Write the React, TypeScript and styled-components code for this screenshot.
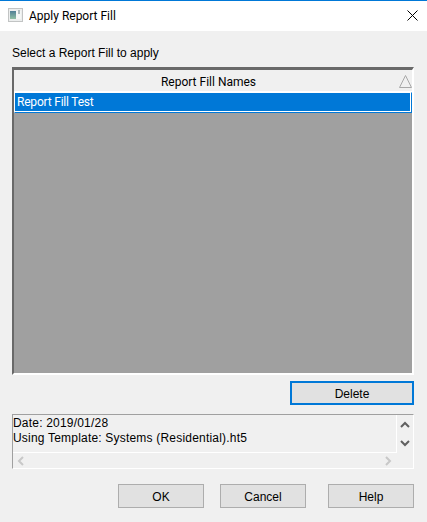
import { createGlobalStyle, styled } from "styled-components";

const GlobalStyle = createGlobalStyle`
  *, *::before, *::after {
    box-sizing: border-box;
  }
  html, body {
    margin: 0;
    padding: 0;
    background: #f0f0f0;
  }
  body {
    font-family: "Liberation Sans", Arial, sans-serif;
    font-size: 12px;
    color: #000;
  }
`;

const Dialog = styled.div`
  width: 427px;
  height: 522px;
  display: flex;
  flex-direction: column;
  background: #f0f0f0;
  overflow: hidden;
`;

const TitleBar = styled.div`
  height: 31px;
  flex: none;
  display: flex;
  align-items: center;
  gap: 6px;
  padding: 0 9px 0 8px;
  background: #fff;
  border-top: 1px solid #0078d7;
`;

const TitleText = styled.span`
  flex: 1;
  font-family: Roboto, sans-serif;
  font-size: 12px;
`;

const TitleGlyph = styled.svg`
  flex: none;
  margin-bottom: 2px;
`;

const Body = styled.div`
  flex: 1;
  display: flex;
  flex-direction: column;
  padding: 14px 13px 0 12px;
`;

const Prompt = styled.div`
  height: 22px;
  line-height: 16px;
`;

const Grid = styled.div`
  height: 308px;
  display: flex;
  flex-direction: column;
  background: #a0a0a0;
  border-style: solid;
  border-width: 3px 2px 2px 2px;
  border-color: #696969 #fff #fff #696969;
`;

const GridHeader = styled.div`
  height: 22px;
  flex: none;
  display: flex;
  align-items: center;
  justify-content: center;
  position: relative;
  padding: 2px 9px 0 0;
  font-family: Roboto, sans-serif;
  background: #f0f0f0;
  border-bottom: 1px solid #fff;
`;

const SortMark = styled.svg`
  position: absolute;
  right: 0;
  top: 5px;
`;

const GridRow = styled.div`
  height: 21px;
  flex: none;
  line-height: 19px;
  padding-left: 2px;
  font-family: Roboto, sans-serif;
  letter-spacing: -0.2px;
  background: #0078d7;
  color: #fff;
  border: 1px solid;
  border-color: #fff #0078d7 #0078d7 #fff;
  box-shadow: inset -1px -1px 0 #fff;
`;

const DeleteRow = styled.div`
  display: flex;
  justify-content: flex-end;
  padding-top: 6px;
`;

const Button = styled.button<{ $wide?: boolean; $focused?: boolean }>`
  width: ${(p) => (p.$wide ? "124px" : "86px")};
  height: 24px;
  padding: 1px 0 0;
  font: inherit;
  color: #000;
  background: #e1e1e1;
  border: ${(p) => (p.$focused ? "2px solid #0078d7" : "1px solid #adadad")};
`;

const InfoBox = styled.div`
  height: 55px;
  margin-top: 9px;
  display: grid;
  grid-template-columns: 1fr 16px;
  grid-template-rows: 38px 15px;
  border-style: solid;
  border-width: 1px;
  border-color: #a0a0a0 #fff #fff #a0a0a0;
`;

const InfoText = styled.div`
  padding-top: 1px;
  line-height: 15px;
  letter-spacing: 0.2px;
  white-space: nowrap;
  overflow: hidden;
  border-right: 1px solid #fff;
  border-bottom: 1px solid #fff;
`;

const VerticalBar = styled.div`
  display: flex;
  flex-direction: column;
  align-items: center;
  justify-content: space-between;
  padding: 6px 0 6px;
`;

const HorizontalBar = styled.div`
  display: flex;
  align-items: center;
  justify-content: space-between;
  padding: 0 5px 0 4px;
`;

const Actions = styled.div`
  display: flex;
  justify-content: flex-end;
  padding-top: 15px;
  gap: 16px;
`;

const HelpButton = styled(Button)`
  margin-left: 6px;
`;

function AppIcon() {
  return (
    <TitleGlyph width="15" height="14" viewBox="0 0 15 14">
      <defs>
        <linearGradient id="appIconFill" x1="0" y1="0" x2="0" y2="1">
          <stop offset="0" stopColor="#4f7f96" />
          <stop offset="1" stopColor="#8fc0a4" />
        </linearGradient>
      </defs>
      <rect x="0.5" y="0.5" width="14" height="13" fill="#eceeee" stroke="#c2c4c4" />
      <rect x="2" y="3" width="6" height="8" fill="url(#appIconFill)" />
      <rect x="8" y="3" width="5" height="8" fill="#f4f7f6" />
      <rect x="10" y="2" width="2" height="4" fill="#aebcbe" />
    </TitleGlyph>
  );
}

function CloseIcon() {
  return (
    <TitleGlyph width="11" height="11" viewBox="0 0 11 11">
      <path d="M0.5 0.5L10.5 10.5M10.5 0.5L0.5 10.5" stroke="#000" strokeWidth="1" fill="none" />
    </TitleGlyph>
  );
}

function Chevron({ dir, color }: { dir: "up" | "down" | "left" | "right"; color: string }) {
  const paths = {
    up: "M1 6L5 2L9 6",
    down: "M1 2L5 6L9 2",
    left: "M6 1L2 5L6 9",
    right: "M2 1L6 5L2 9",
  };
  return (
    <svg width={dir === "up" || dir === "down" ? 10 : 8} height={dir === "up" || dir === "down" ? 8 : 10}>
      <path d={paths[dir]} stroke={color} strokeWidth="2" fill="none" />
    </svg>
  );
}

export default function App() {
  return (
    <Dialog>
      <GlobalStyle />
      <TitleBar>
        <AppIcon />
        <TitleText>Apply Report Fill</TitleText>
        <CloseIcon />
      </TitleBar>
      <Body>
        <Prompt>Select a Report Fill to apply</Prompt>
        <Grid>
          <GridHeader>
            Report Fill Names
            <SortMark width="13" height="13" viewBox="0 0 13 13">
              <path d="M6.5 0.5L12.5 12.5H0.5Z" fill="none" stroke="#a8a8a8" />
            </SortMark>
          </GridHeader>
          <GridRow>Report Fill Test</GridRow>
        </Grid>
        <DeleteRow>
          <Button $wide $focused>Delete</Button>
        </DeleteRow>
        <InfoBox>
          <InfoText>
            Date: 2019/01/28
            <br />
            Using Template: Systems (Residential).ht5
          </InfoText>
          <VerticalBar>
            <Chevron dir="up" color="#606060" />
            <Chevron dir="down" color="#606060" />
          </VerticalBar>
          <HorizontalBar>
            <Chevron dir="left" color="#c8c8c8" />
            <Chevron dir="right" color="#c8c8c8" />
          </HorizontalBar>
        </InfoBox>
        <Actions>
          <Button>OK</Button>
          <Button>Cancel</Button>
          <HelpButton>Help</HelpButton>
        </Actions>
      </Body>
    </Dialog>
  );
}
